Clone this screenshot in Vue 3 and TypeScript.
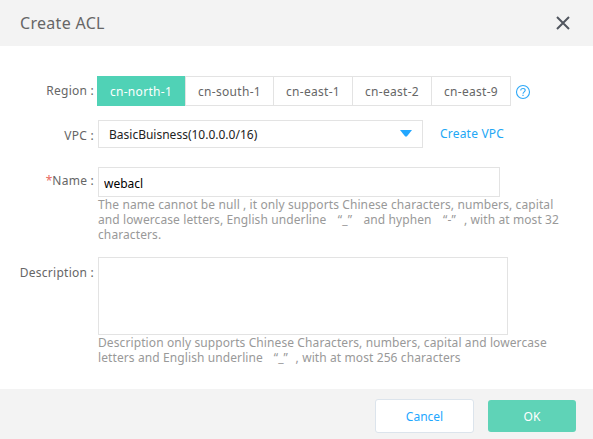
<script setup lang="ts">
import { ref } from 'vue'

const regions = ['cn-north-1', 'cn-south-1', 'cn-east-1', 'cn-east-2', 'cn-east-9']
const selected = ref('cn-north-1')
const name = ref('webacl')
const description = ref('')
</script>

<template>
  <div class="dialog">
    <header class="head">
      <h1 class="title">Create ACL</h1>
      <svg class="close" width="14" height="14" viewBox="0 0 14 14">
        <path d="M1 1L13 13M13 1L1 13" fill="none" stroke="#51565f" stroke-width="2" />
      </svg>
    </header>
    <main class="body">
      <div class="row region-row">
        <span class="label">Region :</span>
        <div class="regions">
          <div v-for="r in regions" :key="r" class="region" :class="[r, { active: r === selected }]" @click="selected = r">{{ r }}</div>
        </div>
        <svg class="help" width="16" height="16" viewBox="0 0 16 16" fill="none" stroke="#2ea8f7">
          <circle cx="8" cy="8" r="6.5" stroke-width="1.1" />
          <path d="M5.8 6.6V6.2C5.8 3.9 10.2 3.9 10.2 6.3C10.2 7.8 8 7.9 8 9.8" stroke-width="1.1" />
          <path d="M8 10.8V12" stroke-width="1.2" />
        </svg>
      </div>
      <div class="row vpc-row">
        <span class="label">VPC :</span>
        <div class="select">
          <span class="value">BasicBuisness(10.0.0.0/16)</span>
          <svg width="12" height="7" viewBox="0 0 12 7"><path d="M0 0H12L6.8 6.5H5.2Z" fill="#22a7ff" /></svg>
        </div>
        <a class="link">Create VPC</a>
      </div>
      <div class="row name-row">
        <span class="label"><i class="star">*</i>Name :</span>
        <div>
          <input v-model="name" class="input" type="text" />
          <p class="hint">
            <span class="n1">The name cannot be null , it only supports Chinese characters, numbers, capital</span>
            <span class="n2">and lowercase letters, English underline <b class="ql">“</b>_<b class="qr">”</b> and hyphen <b class="ql">“</b>-<b class="qr">”</b>, with at most 32</span>
            <span class="n3">characters.</span>
          </p>
        </div>
      </div>
      <div class="row desc-row">
        <span class="label">Description :</span>
        <div>
          <textarea v-model="description" class="area"></textarea>
          <p class="hint">
            <span class="d1">Description only supports Chinese Characters, numbers, capital and lowercase</span>
            <span class="d2">letters and English underline <b class="ql">“</b>_<b class="qr">”</b>, with at most 256 characters</span>
          </p>
        </div>
      </div>
    </main>
    <footer class="foot">
      <button class="btn cancel">Cancel</button>
      <button class="btn ok">OK</button>
    </footer>
  </div>
</template>

<style>
body { margin: 0; background: #fff; }
</style>

<style scoped>
.dialog, .dialog * { box-sizing: border-box; }
.dialog { width: 593px; height: 439px; display: flex; flex-direction: column; font: 12px/15px "Noto Sans", "Open Sans", sans-serif; color: #666; white-space: nowrap; }
.head { height: 46px; background: #f3f3f3; display: flex; align-items: center; justify-content: space-between; padding: 0 23px 0 20px; }
.title { margin: 0; font-size: 16px; line-height: 22px; font-weight: 400; letter-spacing: 0.3px; color: #666; }
.body { height: 343px; padding-top: 30px; }
.row { display: flex; align-items: flex-start; }
.label { width: 94px; text-align: right; margin-right: 4px; flex: none; letter-spacing: 0.25px; }
.star { color: #e8695f; font-style: normal; letter-spacing: 0; }
.region-row { height: 44px; }
.region-row .label { margin-right: 3px; padding-top: 7px; }
.regions { display: flex; width: 414px; height: 30px; border: 1px solid #e3e3e3; border-left: 0; }
.region { width: 79px; padding-top: 1px; line-height: 28px; text-align: center; letter-spacing: 0.3px; border-left: 1px solid #e3e3e3; }
.region.cn-north-1, .region.cn-south-1 { width: 88px; }
.region.active { background: #50d2b6; color: #fff; border: 0; margin: -1px 0; padding-top: 2px; }
.help { margin: 8px 0 0 4px; }
.vpc-row { height: 47px; }
.vpc-row .label { padding-top: 8px; }
.select { width: 325px; height: 28px; border: 1px solid #e3e3e3; padding: 0 10px; display: flex; align-items: center; justify-content: space-between; color: #222; }
.select svg { margin-top: -2px; }
.link { color: #22a7f5; margin: 6px 0 0 17px; letter-spacing: 0.2px; }
.name-row { height: 90px; }
.name-row .label { padding-top: 6px; }
.input { display: block; width: 402px; height: 30px; margin: 0; border: 1px solid #e3e3e3; padding: 2px 5px 0; font: inherit; color: #000; outline: none; }
.area { display: block; width: 410px; height: 78px; margin: 0; border: 1px solid #e3e3e3; resize: none; font: inherit; outline: none; }
.hint { margin: 0; color: #999; letter-spacing: 0.1px; }
.hint span { display: block; height: 15px; }
.hint b { display: inline-block; width: 12px; font-weight: 400; }
.hint .n2 b { width: 12.6px; }
.hint .ql { text-align: right; }
.desc-row .label { padding-top: 8px; }
.foot { height: 50px; background: #f3f3f3; display: flex; align-items: center; justify-content: flex-end; padding: 4px 17px 0 0; gap: 14px; }
.btn { font: inherit; border-radius: 3px; padding: 0; }
.cancel { width: 99px; height: 34px; background: #fff; border: 1px solid #dce4ec; color: #22a7ff; }
.ok { width: 88px; height: 32px; background: #5fd3b7; border: 0; color: #fff; }
</style>
